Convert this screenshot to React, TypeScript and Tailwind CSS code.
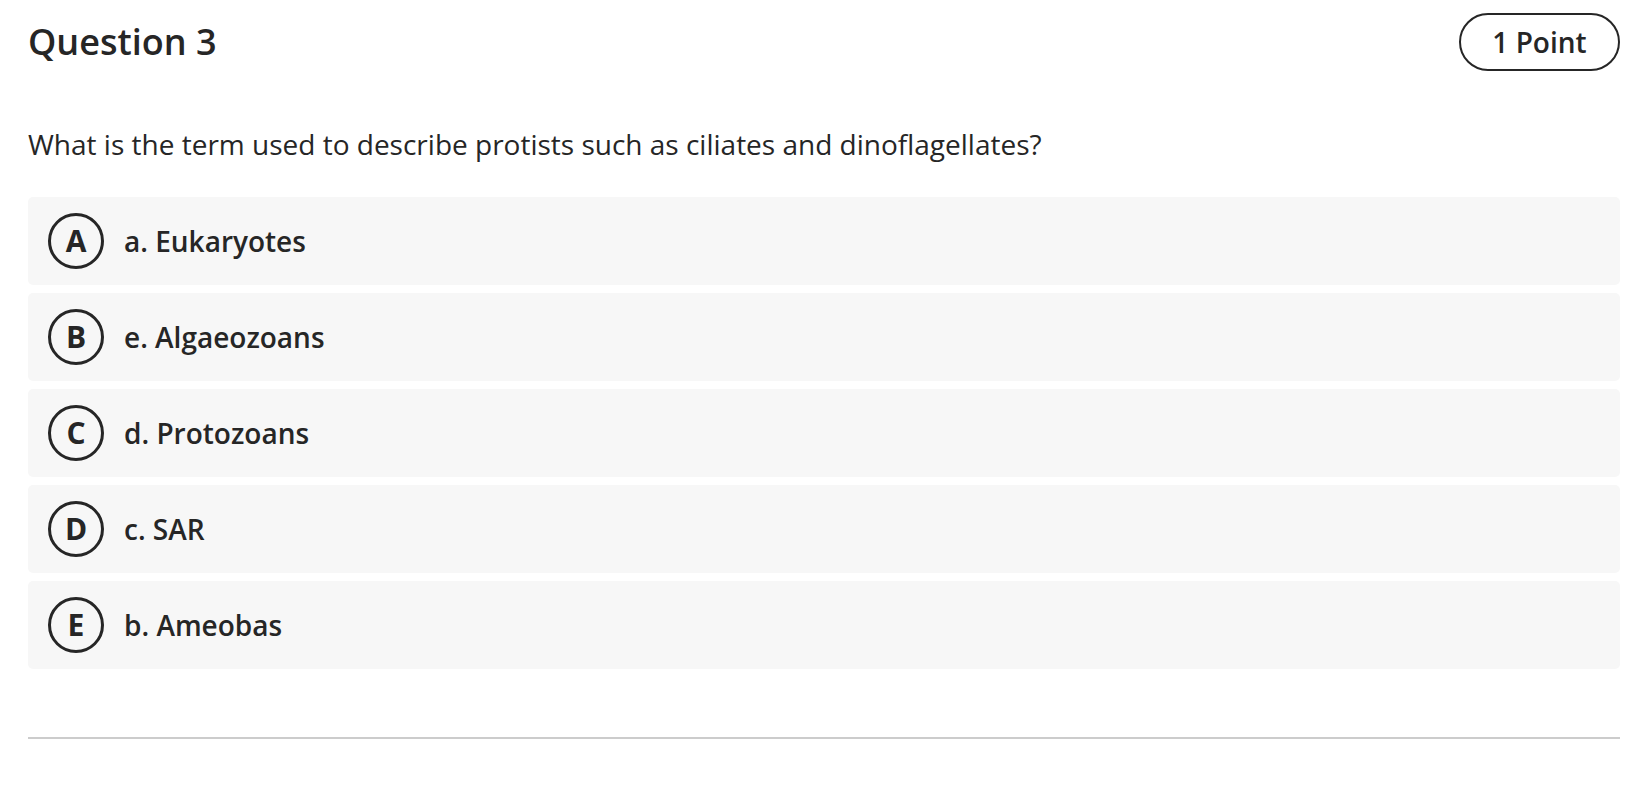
import React from "react";

const options = [
  { letter: "A", text: "a. Eukaryotes" },
  { letter: "B", text: "e. Algaeozoans" },
  { letter: "C", text: "d. Protozoans" },
  { letter: "D", text: "c. SAR" },
  { letter: "E", text: "b. Ameobas" },
];

export default function App() {
  return (
    <div
      className="min-h-screen bg-white pl-[28px] pr-[32px] pt-[13px] text-[#262626]"
      style={{ fontFamily: '"Open Sans", "Noto Sans", sans-serif' }}
    >
      <div className="flex items-center justify-between">
        <h1 className="text-[36px] font-semibold leading-[52px]">Question 3</h1>
        <div className="flex h-[58px] w-[161px] items-center justify-center rounded-full border-2 border-[#262626] text-[28px] font-semibold">
          1 Point
        </div>
      </div>
      <p className="mt-[52px] text-[28px] leading-[42px]">
        What is the term used to describe protists such as ciliates and dinoflagellates?
      </p>
      <div className="mt-[32px] flex flex-col gap-[8px]">
        {options.map((o) => (
          <div
            key={o.letter}
            className="flex h-[88px] items-center gap-[20px] rounded-[5px] bg-[#f7f7f7] pl-[20px]"
          >
            <div className="flex h-[56px] w-[56px] items-center justify-center rounded-full border-[3px] border-[#262626] text-[30px] font-bold leading-none">
              {o.letter}
            </div>
            <span className="text-[28px] font-semibold">{o.text}</span>
          </div>
        ))}
      </div>
      <div className="mt-[68px] h-[2px] bg-[#cccccc]" />
    </div>
  );
}
